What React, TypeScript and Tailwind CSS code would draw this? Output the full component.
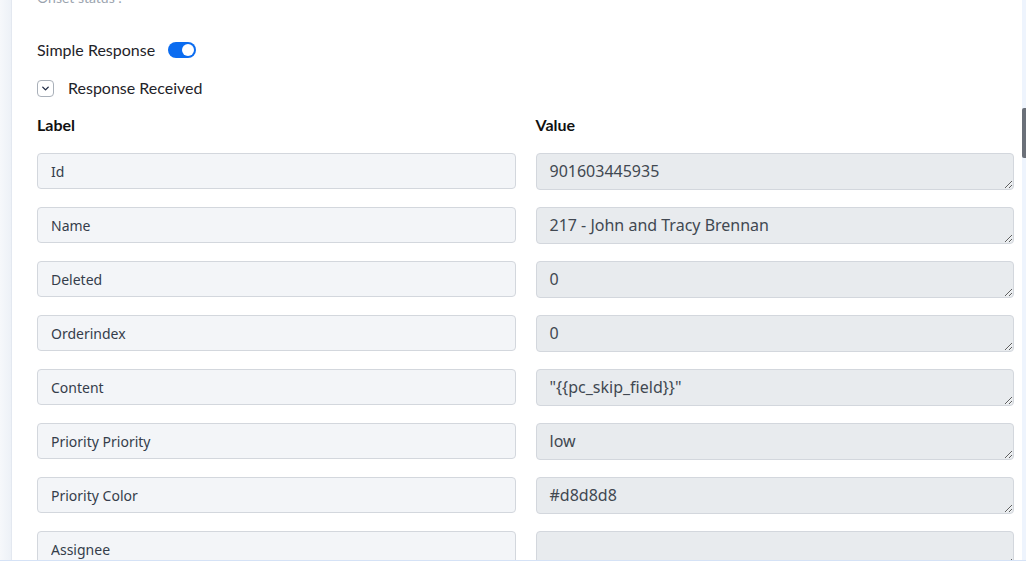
import { ChevronDown } from 'lucide-react';

const rows = [
  { label: 'Id', value: '901603445935' },
  { label: 'Name', value: '217 - John and Tracy Brennan' },
  { label: 'Deleted', value: '0' },
  { label: 'Orderindex', value: '0' },
  { label: 'Content', value: '"{{pc_skip_field}}"' },
  { label: 'Priority Priority', value: 'low' },
  { label: 'Priority Color', value: '#d8d8d8' },
  { label: 'Assignee', value: '' },
];

function Toggle() {
  return (
    <span className="relative inline-flex h-[16px] w-[28px] items-center rounded-full bg-[#0b6cf0]">
      <span className="absolute right-[2px] h-[12px] w-[12px] rounded-full bg-white" />
    </span>
  );
}

export default function App() {
  return (
    <div className="flex h-[570px] w-[1026px] flex-col overflow-hidden bg-white font-['Lato',sans-serif]">
      <div className="flex h-[560px]">
        {/* side rail */}
        <div className="w-[12px] shrink-0 border-r border-[#e3e8f0] bg-gradient-to-r from-[#f6f8fb] to-[#edf1f7]" />

        <div className="flex-1 overflow-hidden pl-[25px] pr-[8px]">
          <div className="-mt-[12px] h-[20px] text-[14px] leading-[20px] text-[#9aa3ae]">Onset status :</div>

          <div className="mt-[30px] flex h-[24px] items-center gap-[13px] text-[16px] text-[#1f2329]">
            <span>Simple Response</span>
            <Toggle />
          </div>

          <div className="mt-[14px] flex h-[24px] items-center gap-[14px] text-[16px] text-[#1f2329]">
            <span className="flex h-[17px] w-[17px] items-center justify-center rounded-[4px] border border-[#a9b0b9]">
              <ChevronDown className="h-[11px] w-[11px] text-[#1f2a44]" strokeWidth={3} />
            </span>
            <span>Response Received</span>
          </div>

          <div className="mt-[14px] grid grid-cols-2 gap-x-[20px] text-[16px] font-bold leading-[22px] text-[#111]">
            <div>Label</div>
            <div>Value</div>
          </div>

          <div className="mt-[17px] flex flex-col gap-[17px] font-['Noto_Sans',sans-serif]">
            {rows.map((r) => (
              <div key={r.label} className="grid grid-cols-2 gap-x-[20px]">
                <input
                  readOnly
                  value={r.label}
                  className="h-[36px] rounded-[4px] border border-[#d3d7dd] bg-[#f3f5f8] px-[13px] text-[14px] text-[#353d4b] outline-none"
                />
                <textarea
                  readOnly
                  value={r.value}
                  rows={1}
                  className="h-[37px] resize-y rounded-[4px] border border-[#d3d7dd] bg-[#e8ebee] px-[13px] pt-[5px] text-[16px] text-[#414851] outline-none"
                />
              </div>
            ))}
          </div>
        </div>

        {/* scrollbar */}
        <div className="w-[4px] shrink-0 bg-[#eef4fd] pt-[108px]">
          <div className="h-[50px] rounded-l-[2px] bg-[#6b7079]" />
        </div>
      </div>
      <div className="h-[10px] border-t border-[#d5e2f6] bg-white" />
    </div>
  );
}
